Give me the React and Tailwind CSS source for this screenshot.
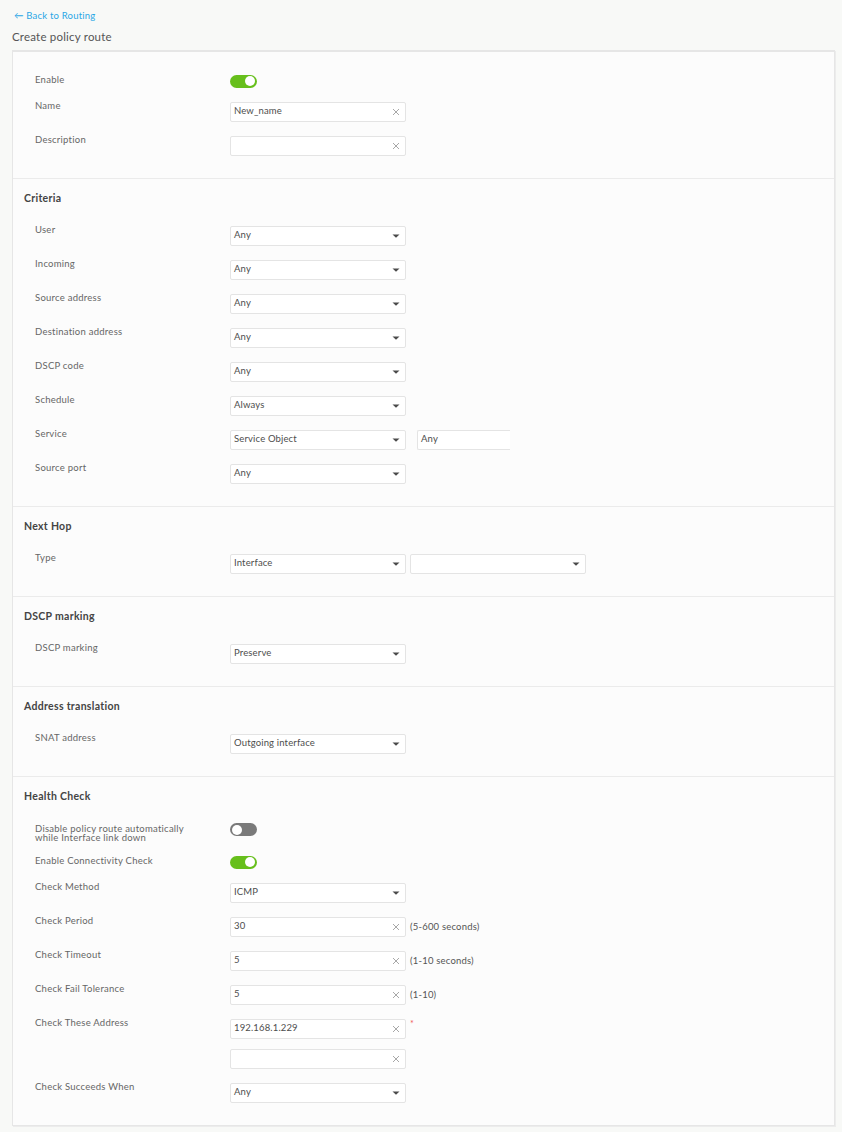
import React from "react";

const font = { fontFamily: "Lato, 'Noto Sans', sans-serif" };

function Toggle({ on }) {
  return (
    <div
      className={`w-[27px] h-[13px] rounded-full flex items-center px-[2px] ${
        on ? "bg-[#67bf1c] justify-end" : "bg-[#7a7a7a] justify-start"
      }`}
    >
      <div className="w-[10px] h-[10px] rounded-full bg-white"></div>
    </div>
  );
}

function Caret() {
  return (
    <svg width="8" height="4" viewBox="0 0 8 4" className="shrink-0">
      <path d="M0.5 0.5 L7.5 0.5 L4 3.8 Z" fill="#4a4a4a" />
    </svg>
  );
}

function Clear() {
  return (
    <svg width="8" height="8" viewBox="0 0 8 8" className="shrink-0">
      <path d="M1 1 L7 7 M7 1 L1 7" stroke="#a8a8a8" strokeWidth="1" />
    </svg>
  );
}

function Select({ value }) {
  return (
    <div className="w-[176px] h-5 bg-white border border-[#e4e4e4] rounded-[2px] flex items-center justify-between pl-[3px] pr-[5px] text-[9.5px] tracking-[0.15px] text-[#4d4d4d]">
      <span>{value}</span>
      <Caret />
    </div>
  );
}

function TextInput({ value = "" }) {
  return (
    <div className="w-[176px] h-5 bg-white border border-[#e4e4e4] rounded-[2px] flex items-center justify-between pl-[3px] pr-[5px] text-[9.5px] tracking-[0.15px] text-[#4d4d4d]">
      <span>{value}</span>
      <Clear />
    </div>
  );
}

function Row({ label, children, two }) {
  return (
    <div className="flex items-start">
      <div
        className={`w-[195px] shrink-0 text-[9.5px] tracking-[0.25px] text-[#666] ${
          two ? "leading-[9px] mt-[0.5px]" : "leading-[12px] -mt-[1.5px]"
        }`}
      >
        {label}
      </div>
      {children}
    </div>
  );
}

function ToggleRow({ label, on, two }) {
  return (
    <Row label={label} two={two}>
      <div className="-mt-[0.5px]">
        <Toggle on={on} />
      </div>
    </Row>
  );
}

function Hint({ children }) {
  return <span className="ml-[4px] text-[9.5px] tracking-[0.2px] leading-5 text-[#555]">{children}</span>;
}

function Section({ title, children, first }) {
  return (
    <div className={`pl-[11px] ${first ? "pt-[23px]" : "pt-[13px] border-t border-[#ebebeb]"} pb-[22px]`}>
      {title && <div className="text-[10.5px] tracking-[0.3px] leading-[12px] font-bold text-[#444]">{title}</div>}
      <div className={`${title ? "mt-[22px]" : ""} pl-[11px] flex flex-col gap-[14px]`}>{children}</div>
    </div>
  );
}

export default function App() {
  return (
    <div className="min-h-screen bg-[#f8f9f7] pl-3 pr-[7px] pt-[10px] pb-[6px]" style={font}>
      <div className="text-[9.5px] tracking-[0.2px] leading-[12px] text-[#2aa7e6] pl-[2px]">← Back to Routing</div>
      <div className="mt-[8px] text-[11.5px] tracking-[0.2px] leading-[14px] text-[#555]">Create policy route</div>

      <div className="mt-[6px] bg-[#fcfcfc] border border-[#e6e6e6] border-t-2 shadow-[1px_1px_0_#ececec]">
        <Section first>
          <ToggleRow label="Enable" on />
          <Row label="Name">
            <TextInput value="New_name" />
          </Row>
          <Row label="Description">
            <TextInput />
          </Row>
        </Section>

        <Section title="Criteria">
          <Row label="User"><Select value="Any" /></Row>
          <Row label="Incoming"><Select value="Any" /></Row>
          <Row label="Source address"><Select value="Any" /></Row>
          <Row label="Destination address"><Select value="Any" /></Row>
          <Row label="DSCP code"><Select value="Any" /></Row>
          <Row label="Schedule"><Select value="Always" /></Row>
          <Row label="Service">
            <Select value="Service Object" />
            <div className="ml-[11px] w-[93px] h-5 bg-white border-l border-y border-[#e4e4e4] rounded-l-[2px] flex items-center pl-[3px] text-[9.5px] tracking-[0.15px] text-[#4d4d4d]">
              Any
            </div>
          </Row>
          <Row label="Source port"><Select value="Any" /></Row>
        </Section>

        <Section title="Next Hop">
          <Row label="Type">
            <Select value="Interface" />
            <div className="ml-[4px]">
              <Select value="" />
            </div>
          </Row>
        </Section>

        <Section title="DSCP marking">
          <Row label="DSCP marking"><Select value="Preserve" /></Row>
        </Section>

        <Section title="Address translation">
          <Row label="SNAT address"><Select value="Outgoing interface" /></Row>
        </Section>

        <Section title="Health Check">
          <ToggleRow
            two
            label={<>Disable policy route automatically<br />while Interface link down</>}
            on={false}
          />
          <ToggleRow label="Enable Connectivity Check" on />
          <Row label="Check Method"><Select value="ICMP" /></Row>
          <Row label="Check Period">
            <TextInput value="30" />
            <Hint>(5-600 seconds)</Hint>
          </Row>
          <Row label="Check Timeout">
            <TextInput value="5" />
            <Hint>(1-10 seconds)</Hint>
          </Row>
          <Row label="Check Fail Tolerance">
            <TextInput value="5" />
            <Hint>(1-10)</Hint>
          </Row>
          <div className="flex flex-col gap-[10px]">
            <Row label="Check These Address">
              <TextInput value="192.168.1.229" />
              <span className="ml-[4px] text-[9px] leading-[10px] text-[#f05a5a]">*</span>
            </Row>
            <Row label="">
              <TextInput />
            </Row>
          </div>
          <Row label="Check Succeeds When"><Select value="Any" /></Row>
        </Section>
      </div>
    </div>
  );
}
